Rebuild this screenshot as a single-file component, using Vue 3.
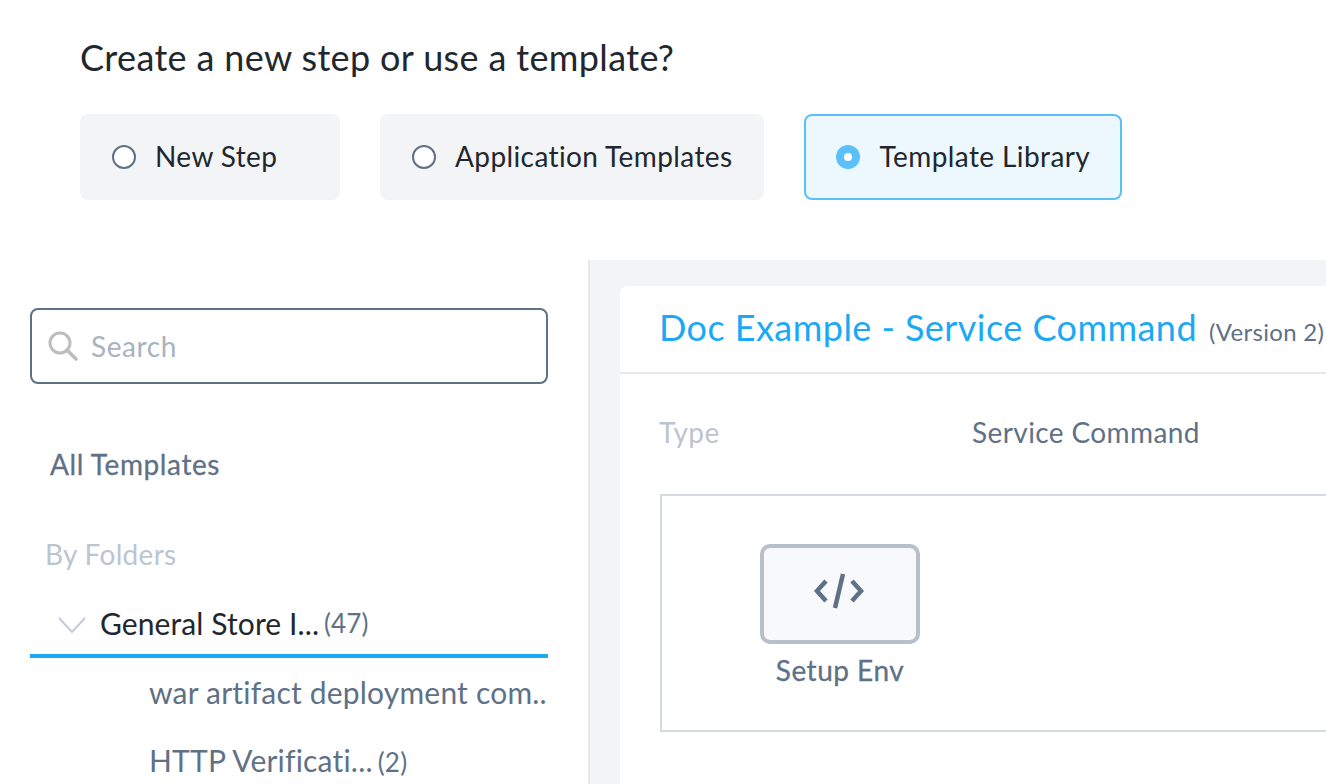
<template>
  <div class="page">
    <h2 class="question">Create a new step or use a template?</h2>
    <div class="choices">
      <div v-for="c in choices" :key="c.label" class="choice" :class="{ active: c.active }">
        <span class="radio"></span>
        <span class="choice-label">{{ c.label }}</span>
      </div>
    </div>

    <div class="browser">
      <aside class="side">
        <div class="search">
          <svg class="search-icon" width="30" height="30" viewBox="0 0 30 30" fill="none" stroke="#bdbdbd" stroke-width="3">
            <circle cx="12" cy="12" r="10" />
            <path d="M19 19l9 9" stroke-linecap="round" stroke-width="3.5" />
          </svg>
          <span class="placeholder">Search</span>
        </div>
        <div class="all">All Templates</div>
        <div class="by">By Folders</div>
        <div class="folder">
          <svg class="chev" width="30" height="18" viewBox="0 0 30 18" fill="none" stroke="#c5cbd6" stroke-width="2">
            <path d="M2 2l13 14L28 2" />
          </svg>
          <span class="folder-name">General Store I...</span>
          <span class="count">(47)</span>
        </div>
        <div class="items">
          <div class="item">war artifact deployment com..</div>
          <div class="item">HTTP Verificati...<span class="count">(2)</span></div>
        </div>
      </aside>

      <section class="panel">
        <div class="card">
          <div class="card-head">
            <span class="title">Doc Example - Service Command</span>
            <span class="version">(Version 2)</span>
          </div>
          <div class="card-body">
            <div class="row">
              <span class="key">Type</span>
              <span class="val">Service Command</span>
            </div>
            <div class="canvas">
              <div class="step">
                <div class="step-box">
                  <svg class="code-icon" width="52" height="36" viewBox="0 0 52 36" fill="none" stroke="#5f7186" stroke-width="4.5">
                    <path d="M13 8l-9 10 9 10M39 8l9 10-9 10" />
                    <path d="M30 1l-8 34" />
                  </svg>
                </div>
                <div class="step-name">Setup Env</div>
              </div>
            </div>
          </div>
        </div>
      </section>
    </div>
  </div>
</template>

<script setup>
const choices = [
  { label: 'New Step', active: false },
  { label: 'Application Templates', active: false },
  { label: 'Template Library', active: true },
];
</script>

<style>
html, body {
  margin: 0;
  background: #fff;
  overflow: hidden;
}
</style>

<style scoped>
.page {
  width: 1326px;
  height: 784px;
  overflow: hidden;
  font-family: "Lato", "Open Sans", sans-serif;
  color: #5f7186;
}

.question {
  margin: 0;
  padding: 37px 0 0 80px;
  font-size: 36px;
  line-height: 40px;
  font-weight: 400;
  letter-spacing: 0.36px;
  color: #22272e;
}

.choices {
  display: flex;
  gap: 40px;
  margin: 37px 0 0 80px;
}

.choice {
  display: flex;
  align-items: center;
  min-width: 260px;
  height: 86px;
  box-sizing: border-box;
  padding: 0 31px 0 32px;
  background: #f3f4f6;
  border-radius: 8px;
  font-size: 28px;
  letter-spacing: 0.4px;
  color: #22272e;
}

.choice-label {
  margin-top: -2px;
}

.choice.active {
  background: #ecf7fe;
  border: 2px solid #5bc0f8;
  padding: 0 30px;
}

.radio {
  width: 24px;
  height: 24px;
  box-sizing: border-box;
  border: 2px solid #5f7186;
  border-radius: 50%;
  background: #fff;
  margin-right: 19px;
}

.active .radio {
  border: 8px solid #5bc0f8;
  margin-right: 20px;
}

.browser {
  display: flex;
  margin-top: 60px;
}

.side {
  width: 518px;
  margin-left: 30px;
  margin-right: 40px;
  flex: none;
}

.search {
  display: flex;
  align-items: center;
  height: 76px;
  margin-top: 48px;
  box-sizing: border-box;
  border: 2px solid #5f7186;
  border-radius: 8px;
  padding-left: 16px;
}

.search-icon {
  margin-right: 13px;
}

.placeholder {
  font-size: 28px;
  letter-spacing: 0.6px;
  color: #a8b3c0;
}

.all {
  margin: 62px 0 0 20px;
  font-size: 28px;
  line-height: 36px;
  letter-spacing: 0.6px;
  -webkit-text-stroke: 0.3px #5f7186;
}

.by {
  margin: 54px 0 0 15px;
  font-size: 28px;
  line-height: 36px;
  letter-spacing: 0.3px;
  color: #bcc4d0;
}

.folder {
  display: flex;
  align-items: center;
  height: 62px;
  margin-top: 20px;
  border-bottom: 4px solid #1ba9f5;
  font-size: 30px;
  letter-spacing: 0.1px;
  color: #22272e;
}

.chev {
  margin: 4px 13px 0 27px;
}

.count {
  margin-left: 5px;
  font-size: 26px;
  color: #5f7186;
}

.items {
  display: flex;
  flex-direction: column;
  gap: 16px;
  margin-top: 8px;
}

.item {
  padding-left: 119px;
  height: 52px;
  line-height: 52px;
  font-size: 30px;
  letter-spacing: 0.2px;
  white-space: nowrap;
}

.panel {
  flex: 1;
  height: 524px;
  min-width: 0;
  background: #f3f4f6;
  border-left: 2px solid #e6e8ec;
  padding: 26px 0 0 30px;
}

.card {
  background: #fff;
  height: 100%;
  border-top-left-radius: 8px;
}

.card-head {
  height: 86px;
  box-sizing: content-box;
  padding-left: 39px;
  border-bottom: 2px solid #e6e8ec;
  display: flex;
  align-items: baseline;
  white-space: nowrap;
}

.title {
  font-size: 36px;
  line-height: 82px;
  letter-spacing: 0.45px;
  color: #1ba9f5;
}

.version {
  margin-left: 12px;
  font-size: 24px;
  letter-spacing: 0.3px;
  color: #5f7186;
}

.card-body {
  padding: 0 0 0 40px;
}

.row {
  display: flex;
  align-items: center;
  height: 120px;
  box-sizing: border-box;
  padding-bottom: 4px;
  font-size: 28px;
  letter-spacing: 0.4px;
}

.key {
  width: 313px;
  margin-left: -1px;
  color: #bcc4d0;
}

.canvas {
  height: 238px;
  box-sizing: border-box;
  border: 2px solid #d5d9e0;
  border-right: none;
  padding: 48px 0 0 98px;
}

.step {
  width: 160px;
  text-align: center;
}

.step-box {
  height: 100px;
  box-sizing: border-box;
  border: 4px solid #b8bfcc;
  border-radius: 10px;
  background: #f8f9fb;
  display: flex;
  align-items: center;
  justify-content: center;
}

.code-icon {
  margin: 0 2px 6px 0;
}

.step-name {
  margin-top: 8px;
  font-size: 28px;
  line-height: 36px;
  letter-spacing: 0.5px;
  -webkit-text-stroke: 0.3px #5f7186;
}
</style>
